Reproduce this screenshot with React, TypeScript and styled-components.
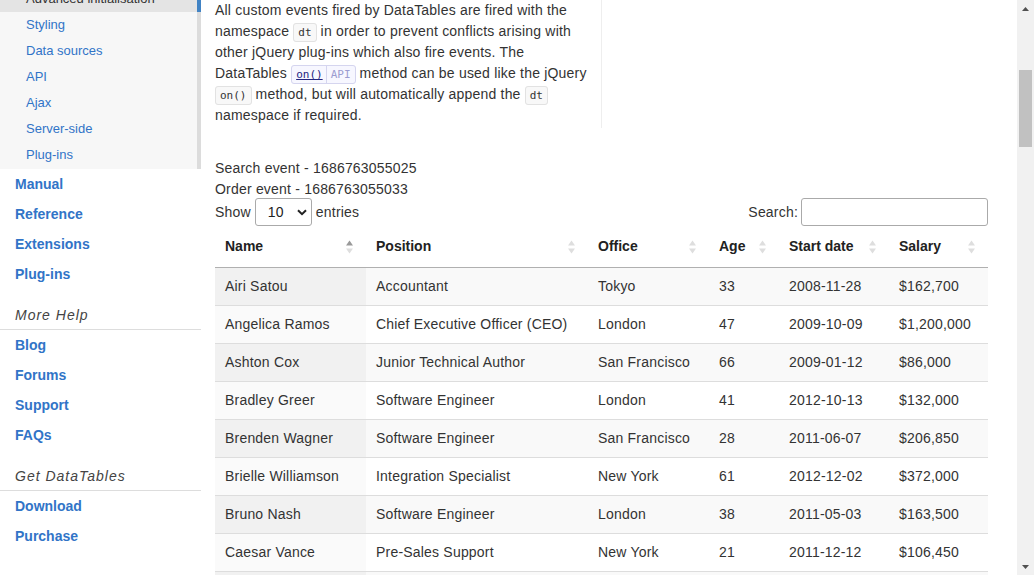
import styled, {createGlobalStyle} from 'styled-components';

const COLOR = {
  TEXT: '#333333',
  LINK: '#3174c7',
  SUB_BG: '#f7f7f7',
  ACTIVE_BG: '#e4e4e4',
  STRIP: '#dcdcdc',
  ACCENT: '#4183c4',
  LINE: '#dddddd',
};

const GlobalStyle = createGlobalStyle`
  html, body {
    margin: 0;
    padding: 0;
    height: 100%;
    overflow: hidden;
    background: #fff;
  }
  body {
    font-family: "Liberation Sans", Arial, sans-serif;
    font-size: 14px;
    color: ${COLOR.TEXT};
  }
`;

const Screen = styled.div`
  display: flex;
  width: 1034px;
  height: 575px;
  overflow: hidden;
`;

const Viewport = styled.div`
  flex: 1;
  overflow: hidden;
`;

const Page = styled.div`
  display: flex;
  margin-top: -14px;
`;

/* ---------- sidebar ---------- */

const Sidebar = styled.nav`
  width: 201px;
  flex-shrink: 0;
`;

const SubMenu = styled.ul`
  list-style: none;
  margin: 0;
  padding: 0 0 1px;
  background: ${COLOR.SUB_BG};
  border-right: 4px solid ${COLOR.STRIP};
`;

const SubItem = styled.li<{$active?: boolean}>`
  height: 26px;
  line-height: 26px;
  padding-left: 26px;
  font-size: 13px;
  color: ${p => (p.$active ? COLOR.TEXT : COLOR.LINK)};
  background: ${p => (p.$active ? COLOR.ACTIVE_BG : 'transparent')};
  margin-right: ${p => (p.$active ? '-4px' : '0')};
  border-right: ${p => (p.$active ? `4px solid ${COLOR.ACCENT}` : 'none')};
`;

const MenuLink = styled.a`
  display: block;
  height: 30px;
  line-height: 30px;
  padding-left: 15px;
  font-weight: bold;
  font-size: 14px;
  color: ${COLOR.LINK};
  text-decoration: none;
`;

const MenuHeading = styled.div`
  margin-top: 14px;
  padding: 3px 15px 5px;
  line-height: 18px;
  font-style: italic;
  letter-spacing: 1px;
  color: #444;
  border-bottom: 1px solid ${COLOR.LINE};
`;

/* ---------- main ---------- */

const Main = styled.main`
  flex: 1;
  min-width: 0;
  padding: 14px 29px 0 14px;
`;

const Intro = styled.div`
  display: flex;
`;

const IntroText = styled.p`
  width: 376px;
  margin: 0;
  padding: 0 10px 2px 0;
  line-height: 21px;
  letter-spacing: 0.2px;
  border-right: 1px solid #eeeeee;
`;

const Code = styled.code`
  font-family: "DejaVu Sans Mono", "Liberation Mono", monospace;
  font-size: 11px;
  line-height: 1;
  letter-spacing: 0;
  padding: 2px 4px;
  background: #f8f8f8;
  border: 1px solid #e2e2e2;
  border-radius: 3px;
`;

const ApiCode = styled.code`
  font-family: "DejaVu Sans Mono", "Liberation Mono", monospace;
  font-size: 11px;
  line-height: 1;
  letter-spacing: 0;
  padding: 2px 0;
  border: 1px solid #d5d5ef;
  border-radius: 3px;
  background: #f7f7ff;
`;

const ApiName = styled.a`
  color: #24247f;
  text-decoration: underline;
  padding: 0 3px 0 4px;
`;

const ApiTag = styled.span`
  color: #9c9cd0;
  padding: 2px 4px;
  border-left: 1px solid #d5d5ef;
`;

const EventLog = styled.div`
  margin-top: 30px;
  line-height: 21px;
  letter-spacing: 0.2px;
`;

const Controls = styled.div`
  display: flex;
  justify-content: space-between;
  align-items: center;
  height: 28px;
  margin-top: -2px;
  letter-spacing: 0.2px;
`;

const Label = styled.label`
  display: flex;
  align-items: center;
`;

const SelectBox = styled.div`
  display: flex;
  align-items: center;
  justify-content: space-between;
  box-sizing: border-box;
  width: 57px;
  height: 28px;
  margin: 0 4px;
  padding: 0 4px 0 12px;
  border: 1px solid #aaa;
  border-radius: 3px;
  color: #222;
`;

const SearchInput = styled.input`
  box-sizing: border-box;
  width: 187px;
  height: 28px;
  margin: 0 0 0 3px;
  border: 1px solid #aaa;
  border-radius: 3px;
`;

const Table = styled.table`
  width: 100%;
  border-collapse: separate;
  border-spacing: 0;
  table-layout: fixed;

  tbody tr + tr td {
    border-top: 1px solid ${COLOR.LINE};
  }
`;

const Th = styled.th`
  padding: 10px 13px 10px 10px;
  line-height: 21px;
  text-align: left;
  font-weight: bold;
  color: #222;
  border-bottom: 1px solid #b0b0b0;
`;

const ThInner = styled.div`
  display: flex;
  justify-content: space-between;
  align-items: center;
`;

const Row = styled.tr<{$odd: boolean}>`
  background: ${p => (p.$odd ? '#f9f9f9' : '#ffffff')};
  & > td:first-child {
    background: ${p => (p.$odd ? '#f1f1f1' : '#fafafa')};
  }
`;

const Td = styled.td`
  padding: 8px 10px;
  line-height: 21px;
  letter-spacing: 0.2px;
  white-space: nowrap;
  overflow: hidden;
`;

/* ---------- scrollbar ---------- */

const ScrollBar = styled.div`
  width: 17px;
  flex-shrink: 0;
  background: #f1f1f1;
  display: flex;
  flex-direction: column;
  align-items: center;
`;

const ScrollButton = styled.div`
  height: 17px;
  width: 17px;
  display: flex;
  align-items: center;
  justify-content: center;
`;

const ScrollSpace = styled.div`
  flex: 1;
  width: 100%;
  display: flex;
  justify-content: center;
`;

const Thumb = styled.div`
  margin-top: 53px;
  width: 13px;
  height: 77px;
  background: #c1c1c1;
`;

const columns = [
  {title: 'Name', width: 151},
  {title: 'Position', width: 222},
  {title: 'Office', width: 121},
  {title: 'Age', width: 70},
  {title: 'Start date', width: 110},
  {title: 'Salary', width: 99},
];

const people = [
  ['Airi Satou', 'Accountant', 'Tokyo', '33', '2008-11-28', '$162,700'],
  ['Angelica Ramos', 'Chief Executive Officer (CEO)', 'London', '47', '2009-10-09', '$1,200,000'],
  ['Ashton Cox', 'Junior Technical Author', 'San Francisco', '66', '2009-01-12', '$86,000'],
  ['Bradley Greer', 'Software Engineer', 'London', '41', '2012-10-13', '$132,000'],
  ['Brenden Wagner', 'Software Engineer', 'San Francisco', '28', '2011-06-07', '$206,850'],
  ['Brielle Williamson', 'Integration Specialist', 'New York', '61', '2012-12-02', '$372,000'],
  ['Bruno Nash', 'Software Engineer', 'London', '38', '2011-05-03', '$163,500'],
  ['Caesar Vance', 'Pre-Sales Support', 'New York', '21', '2011-12-12', '$106,450'],
  ['Cara Stevens', 'Sales Assistant', 'New York', '46', '2011-12-06', '$145,600'],
];

const subMenu = ['Styling', 'Data sources', 'API', 'Ajax', 'Server-side', 'Plug-ins'];

function SortIcon({asc}: {asc?: boolean}) {
  return (
    <svg width="7" height="14" viewBox="0 0 7 14">
      <polygon points="0,5.5 3.5,0.5 7,5.5" fill={asc ? '#999999' : '#dedede'} />
      <polygon points="0,8.5 7,8.5 3.5,13.5" fill="#dedede" />
    </svg>
  );
}

function Triangle({down}: {down?: boolean}) {
  return (
    <svg width="7" height="4" viewBox="0 0 7 4">
      <polygon points={down ? '0,0 7,0 3.5,4' : '0,4 7,4 3.5,0'} fill="#505050" />
    </svg>
  );
}

function App() {
  return (
    <>
      <GlobalStyle />
      <Screen>
        <Viewport>
          <Page>
            <Sidebar>
              <SubMenu>
                <SubItem $active>Advanced initialisation</SubItem>
                {subMenu.map(item => (
                  <SubItem key={item}>{item}</SubItem>
                ))}
              </SubMenu>
              <MenuLink>Manual</MenuLink>
              <MenuLink>Reference</MenuLink>
              <MenuLink>Extensions</MenuLink>
              <MenuLink>Plug-ins</MenuLink>
              <MenuHeading>More Help</MenuHeading>
              <MenuLink>Blog</MenuLink>
              <MenuLink>Forums</MenuLink>
              <MenuLink>Support</MenuLink>
              <MenuLink>FAQs</MenuLink>
              <MenuHeading>Get DataTables</MenuHeading>
              <MenuLink>Download</MenuLink>
              <MenuLink>Purchase</MenuLink>
            </Sidebar>

            <Main>
              <Intro>
                <IntroText>
                  All custom events fired by DataTables are fired with the namespace <Code>dt</Code> in
                  order to prevent conflicts arising with other jQuery plug-ins which also fire events.
                  The DataTables{' '}
                  <ApiCode>
                    <ApiName>on()</ApiName>
                    <ApiTag>API</ApiTag>
                  </ApiCode>{' '}
                  method can be used like the jQuery <Code>on()</Code> method, but will automatically
                  append the <Code>dt</Code> namespace if required.
                </IntroText>
              </Intro>

              <EventLog>
                <div>Search event - 1686763055025</div>
                <div>Order event - 1686763055033</div>
              </EventLog>

              <Controls>
                <Label>
                  Show
                  <SelectBox>
                    10
                    <svg width="10" height="7" viewBox="0 0 10 7">
                      <path d="M1 1.2 L5 5.2 L9 1.2" stroke="#222" strokeWidth="2" fill="none" />
                    </svg>
                  </SelectBox>
                  entries
                </Label>
                <Label>
                  Search:
                  <SearchInput type="search" />
                </Label>
              </Controls>

              <Table>
                <colgroup>
                  {columns.map(c => (
                    <col key={c.title} style={{width: c.width}} />
                  ))}
                </colgroup>
                <thead>
                  <tr>
                    {columns.map((c, i) => (
                      <Th key={c.title}>
                        <ThInner>
                          {c.title}
                          <SortIcon asc={i === 0} />
                        </ThInner>
                      </Th>
                    ))}
                  </tr>
                </thead>
                <tbody>
                  {people.map((p, i) => (
                    <Row key={p[0]} $odd={i % 2 === 0}>
                      {p.map((cell, j) => (
                        <Td key={j}>{cell}</Td>
                      ))}
                    </Row>
                  ))}
                </tbody>
              </Table>
            </Main>
          </Page>
        </Viewport>

        <ScrollBar>
          <ScrollButton>
            <Triangle />
          </ScrollButton>
          <ScrollSpace>
            <Thumb />
          </ScrollSpace>
          <ScrollButton>
            <Triangle down />
          </ScrollButton>
        </ScrollBar>
      </Screen>
    </>
  );
}

export default App;
